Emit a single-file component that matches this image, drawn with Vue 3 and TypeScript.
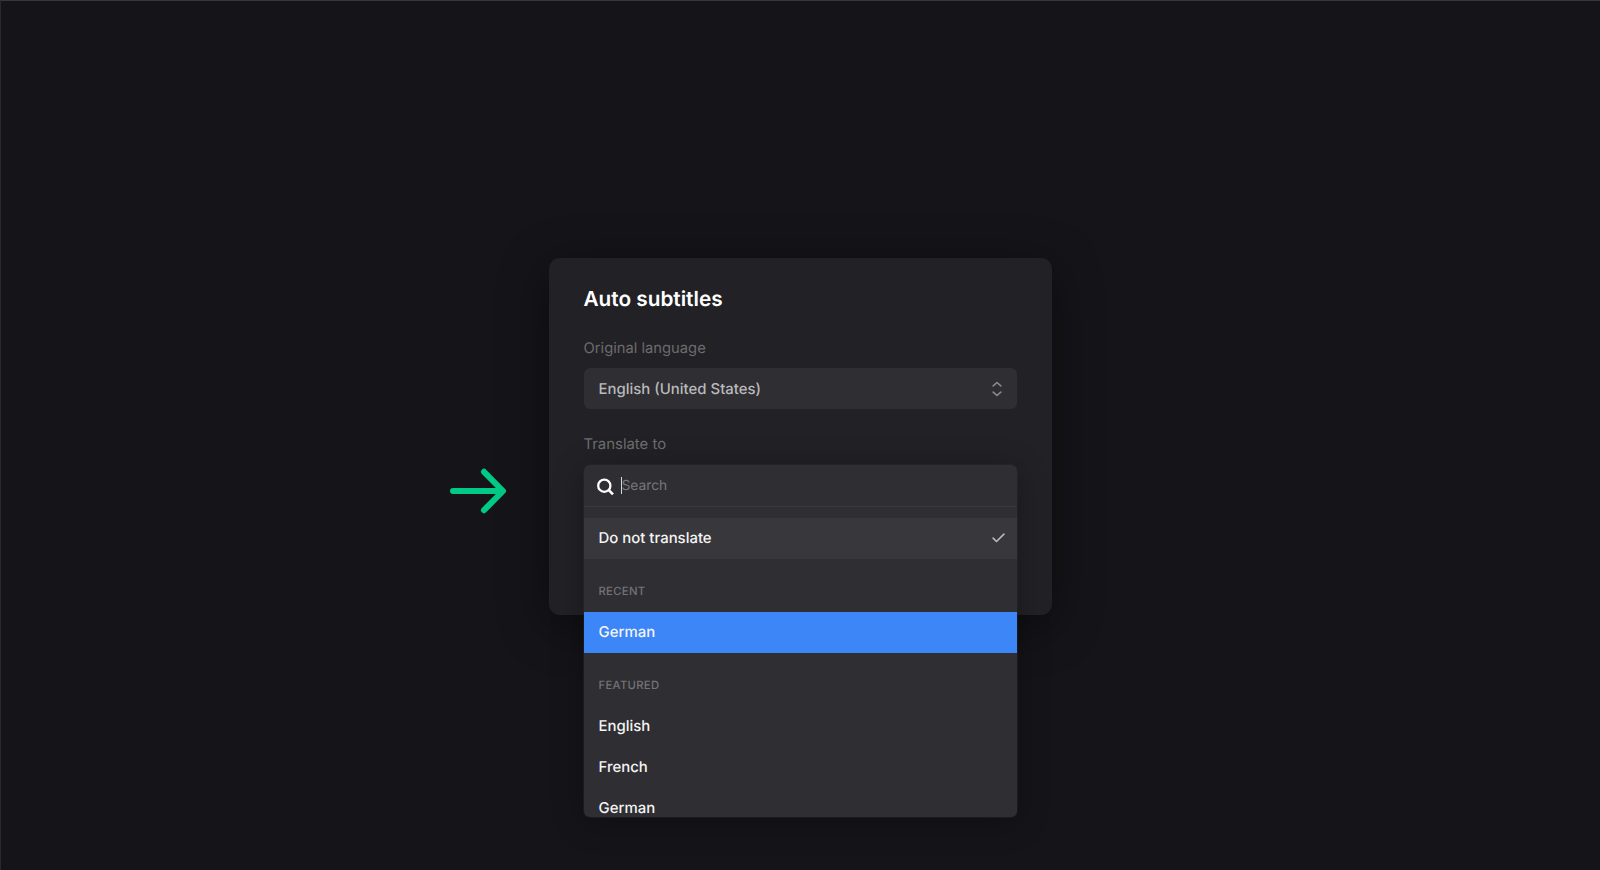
<script setup lang="ts">
import { ref } from 'vue'

interface Group {
  title: string
  items: { name: string; active?: boolean }[]
}

const original = ref('English (United States)')
const groups: Group[] = [
  { title: 'Recent', items: [{ name: 'German', active: true }] },
  { title: 'Featured', items: [{ name: 'English' }, { name: 'French' }, { name: 'German' }] },
]
</script>

<template>
  <main class="page">
    <svg class="arrow" viewBox="0 0 56 45" fill="none">
      <path d="M3 23H52M34 3.8L53 23L34 42.2" stroke="#00ca85" stroke-width="6" stroke-linecap="round" stroke-linejoin="round" />
    </svg>
    <section class="card">
      <h1 class="title">Auto subtitles</h1>
      <div class="label">Original language</div>
      <div class="select">
        <span>{{ original }}</span>
        <svg class="updown" viewBox="0 0 10 16" fill="none">
          <path d="M1.2 4.9L5 1.5L8.8 4.9M1.2 11.1L5 14.5L8.8 11.1" stroke="#8b8b8f" stroke-width="1.6" stroke-linecap="round" stroke-linejoin="round" />
        </svg>
      </div>
      <div class="label second">Translate to</div>
      <div class="dropdown">
        <div class="search">
          <svg class="glass" viewBox="0 0 18 18" fill="none">
            <circle cx="7.3" cy="7.7" r="6.1" stroke="#fff" stroke-width="2.3" />
            <path d="M11.8 12.2L16 16.4" stroke="#fff" stroke-width="2.6" />
          </svg>
          <span class="caret"></span>
          <span class="placeholder">Search</span>
        </div>
        <div class="option selected">
          <span>Do not translate</span>
          <svg class="check" viewBox="0 0 13 10" fill="none">
            <path d="M1.1 5.1L4.5 8.5L11.9 1.1" stroke="#b9b9bb" stroke-width="1.6" stroke-linecap="round" stroke-linejoin="round" />
          </svg>
        </div>
        <template v-for="group in groups" :key="group.title">
          <div class="group-title">{{ group.title }}</div>
          <div v-for="item in group.items" :key="item.name" class="option" :class="{ active: item.active }">
            {{ item.name }}
          </div>
        </template>
      </div>
    </section>
  </main>
</template>

<style>
body {
  background: #151519;
}
</style>

<style scoped>
.page {
  box-sizing: border-box;
  height: 870px;
  padding: 257px 0 0 449px;
  overflow: hidden;
  display: flex;
  align-items: flex-start;
  border-top: 1px solid #38383b;
  border-left: 1px solid #29292c;
  background: #151519;
  font-family: Inter, "Liberation Sans", sans-serif;
  font-size: 15px;
  text-rendering: geometricPrecision;
}
.arrow {
  width: 56px;
  height: 45px;
  margin-top: 210px;
  flex: none;
  overflow: visible;
}
.card {
  box-sizing: border-box;
  width: 503px;
  height: 357px;
  margin-left: 43px;
  padding: 28px 35px 0;
  border-radius: 11px;
  background: #222125;
  box-shadow: 0 10px 50px rgba(0, 0, 0, 0.45);
}
.title {
  margin: 0 0 0 -0.5px;
  height: 28px;
  line-height: 28px;
  font-size: 20.75px;
  font-weight: 600;
  color: #fff;
}
.label {
  height: 20px;
  margin: 24px 0 0 -0.5px;
  line-height: 20px;
  font-size: 14.75px;
  color: #6c6b6e;
}
.label.second {
  margin-top: 25px;
  font-size: 14.9px;
}
.select {
  box-sizing: border-box;
  display: flex;
  align-items: center;
  justify-content: space-between;
  height: 41px;
  margin-top: 10px;
  padding: 0 15px 0 14.5px;
  border-radius: 6px;
  background: #2f2e32;
  color: #b9b9bb;
  font-size: 14.95px;
  font-weight: 500;
}
.updown {
  width: 10px;
  height: 16px;
}
.dropdown {
  height: 352px;
  margin-top: 11px;
  overflow: hidden;
  border-radius: 6px;
  background: #2f2e32;
  box-shadow: 0 0 0 1px rgba(47, 46, 50, 0.35), 0 5px 32px rgba(0, 0, 0, 0.3);
}
.search {
  box-sizing: border-box;
  display: flex;
  align-items: center;
  height: 42px;
  margin-bottom: 11px;
  padding-left: 13px;
  border-bottom: 1px solid #39383c;
  color: #78777a;
}
.glass {
  width: 18px;
  height: 18px;
  margin-top: 2px;
}
.caret {
  width: 1px;
  height: 17px;
  margin-left: 6px;
  background: #d8d8d9;
}
.placeholder {
  margin-left: -0.5px;
  font-size: 13.8px;
}
.option {
  box-sizing: border-box;
  display: flex;
  align-items: center;
  justify-content: space-between;
  height: 41px;
  padding: 0 12px 0.8px 14.5px;
  color: #f4f4f5;
  font-size: 14.95px;
  font-weight: 500;
}
.selected {
  background: #38373b;
}
.active {
  background: #3c86f7;
}
.check {
  width: 13px;
  height: 10px;
}
.group-title {
  box-sizing: border-box;
  height: 52.8px;
  padding: 21px 14.5px 0;
  line-height: 23px;
  font-size: 11.3px;
  font-weight: 500;
  letter-spacing: 0.3px;
  text-transform: uppercase;
  color: #737276;
}
</style>
